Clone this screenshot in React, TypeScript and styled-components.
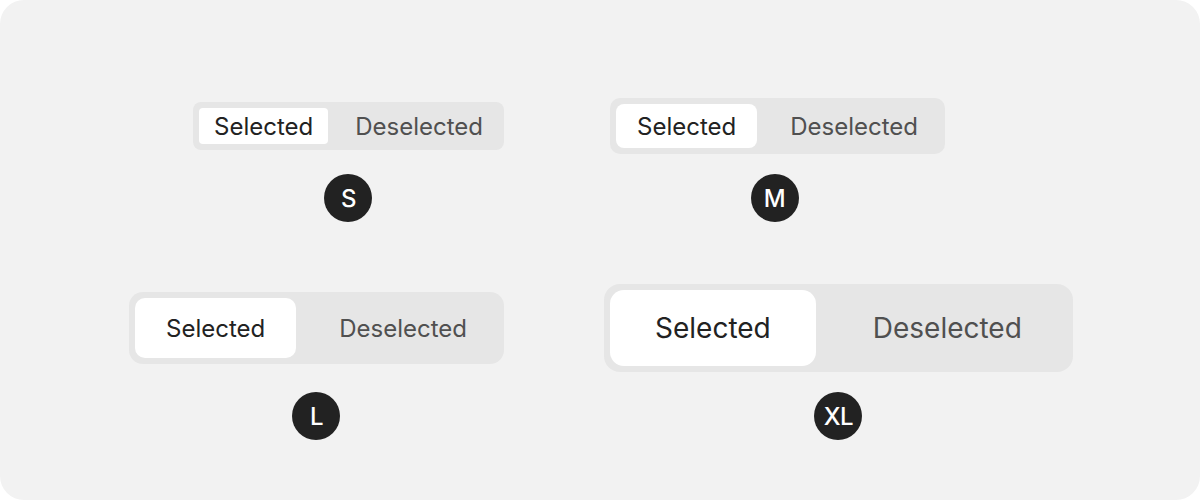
import styled, { createGlobalStyle } from 'styled-components';

const GlobalStyle = createGlobalStyle`
  html, body {
    margin: 0;
    padding: 0;
    background: #ffffff;
  }
  body {
    font-family: Inter, "Liberation Sans", sans-serif;
  }
`;

type Size = 's' | 'm' | 'l' | 'xl';

const sizes: Record<
  Size,
  { height: number; pad: number; font: number; radius: number; chipRadius: number }
> = {
  s: { height: 36, pad: 15, font: 24, radius: 8, chipRadius: 4 },
  m: { height: 44, pad: 21, font: 24, radius: 10, chipRadius: 8 },
  l: { height: 60, pad: 31, font: 24, radius: 14, chipRadius: 10 },
  xl: { height: 76, pad: 45, font: 28, radius: 16, chipRadius: 14 },
};

const Card = styled.div`
  width: 1200px;
  height: 500px;
  box-sizing: border-box;
  background: #f2f2f2;
  border-radius: 24px;
  padding: 98px 92px 0 0;
  display: grid;
  grid-template-columns: 1fr 1fr;
  column-gap: 100px;
  row-gap: 62px;
  align-content: start;
`;

const Cell = styled.div<{ $side: 'left' | 'right' }>`
  display: flex;
  flex-direction: column;
  align-items: center;
  gap: 20px;
  justify-self: ${(p) => (p.$side === 'left' ? 'end' : 'start')};
`;

const Slot = styled.div<{ $h: number }>`
  height: ${(p) => p.$h}px;
  display: flex;
  align-items: center;
`;

const Track = styled.div<{ $size: Size; $shift?: number }>`
  display: flex;
  gap: 12px;
  padding: 6px;
  background: #e6e6e6;
  border-radius: ${(p) => sizes[p.$size].radius}px;
  margin-left: ${(p) => p.$shift ?? 0}px;
`;

const Item = styled.div<{ $size: Size; $active?: boolean }>`
  height: ${(p) => sizes[p.$size].height}px;
  padding: 0 ${(p) => sizes[p.$size].pad}px;
  display: flex;
  align-items: center;
  font-size: ${(p) => sizes[p.$size].font}px;
  color: ${(p) => (p.$active ? '#222222' : '#505050')};
  background: ${(p) => (p.$active ? '#ffffff' : 'transparent')};
  border-radius: ${(p) => sizes[p.$size].chipRadius}px;
  white-space: nowrap;
`;

const Badge = styled.div`
  width: 48px;
  height: 48px;
  border-radius: 50%;
  background: #222222;
  color: #ffffff;
  display: flex;
  align-items: center;
  justify-content: center;
  font-size: 24px;
  font-weight: 500;
  letter-spacing: -0.5px;
`;

const Segment = ({ size, shift }: { size: Size; shift?: number }) => (
  <Track $size={size} $shift={shift}>
    <Item $size={size} $active>
      Selected
    </Item>
    <Item $size={size}>Deselected</Item>
  </Track>
);

const App = () => (
  <>
    <GlobalStyle />
    <Card>
      <Cell $side="left">
        <Slot $h={56}>
          <Segment size="s" />
        </Slot>
        <Badge>S</Badge>
      </Cell>
      <Cell $side="right">
        <Slot $h={56}>
          <Segment size="m" shift={6} />
        </Slot>
        <Badge>M</Badge>
      </Cell>
      <Cell $side="left">
        <Slot $h={88}>
          <Segment size="l" />
        </Slot>
        <Badge>L</Badge>
      </Cell>
      <Cell $side="right">
        <Slot $h={88}>
          <Segment size="xl" />
        </Slot>
        <Badge>XL</Badge>
      </Cell>
    </Card>
  </>
);

export default App;
